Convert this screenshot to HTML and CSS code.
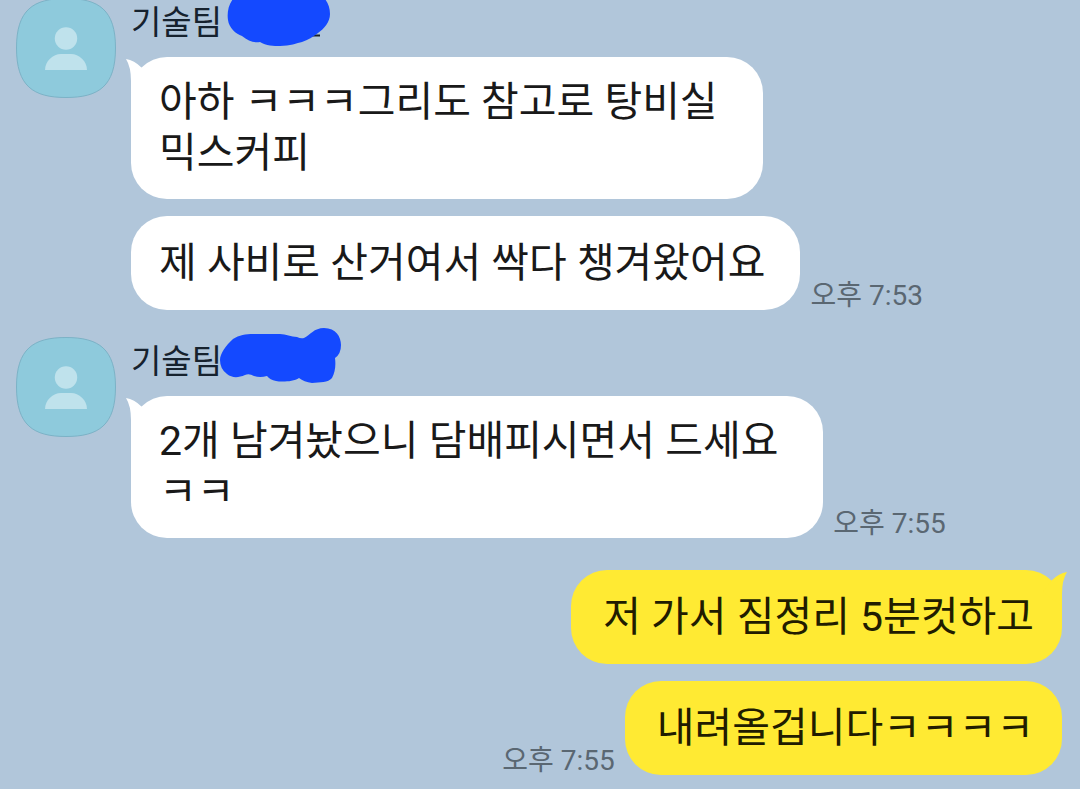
FILE: index.html
```html
<!DOCTYPE html>
<html lang="ko">
<head>
    <meta charset="UTF-8">
    <meta name="viewport" content="width=device-width, initial-scale=1.0">
    <title>기술팀</title>
    <link rel="stylesheet" href="styles.css">
</head>
<body>

    <main class="chat">
        <section class="group">
            <svg class="avatar" viewBox="0 0 100 100" aria-hidden="true">
                <path class="avatar-bg" d="M50 .5C83 .5 99.5 12 99.5 50S83 99.5 50 99.5.5 88 .5 50 17 .5 50 .5Z"/>
                <circle class="avatar-person" cx="50" cy="40.5" r="11.2"/>
                <path class="avatar-person" d="M29 72c0-9 8-16 16-16h10c8 0 16 7 16 16Z"/>
            </svg>
            <div class="content">
                <div class="name">기술팀
                    <svg class="scribble" viewBox="220 -13 130 60" aria-hidden="true">
                        <path class="stroke-rest" d="M312 35.5h8"/>
                        <path d="M233-1C228 5 227 14 228 20C229 28 236 34 242 36C248 41 254 43 260 42C266 46 274 46 280 46C290 46 297 43 302 42C308 40 313 37 318 33C324 29 330 22 330 14C330 8 328 3 325-1Z"/>
                    </svg>
                </div>
                <div class="row">
                    <div class="bubble multi">
                        <svg class="tail" viewBox="0 0 26 36" aria-hidden="true"><path d="M0 2Q8 3 16 11L24 22 5 36V24Q5 10 0 2Z"/></svg>
                        아하 ㅋㅋㅋ그리도 참고로 탕비실<br>믹스커피
                    </div>
                </div>
                <div class="row">
                    <div class="bubble">제 사비로 산거여서 싹다 챙겨왔어요</div>
                    <time class="time">오후 7:53</time>
                </div>
            </div>
        </section>

        <section class="group">
            <svg class="avatar" viewBox="0 0 100 100" aria-hidden="true">
                <path class="avatar-bg" d="M50 .5C83 .5 99.5 12 99.5 50S83 99.5 50 99.5.5 88 .5 50 17 .5 50 .5Z"/>
                <circle class="avatar-person" cx="50" cy="40.5" r="11.2"/>
                <path class="avatar-person" d="M29 72c0-9 8-16 16-16h10c8 0 16 7 16 16Z"/>
            </svg>
            <div class="content">
                <div class="name">기술팀
                    <svg class="scribble" viewBox="220 326 130 60" aria-hidden="true">
                        <path d="M220 360C220 354 226 345 233 339C239 335 246 334 253 334L280 334C286 334 291 337 297 337Q301 339 304 338C310 335 314 328 324 328C336 328 341 337 341 345Q341 354 335 358C336 366 335 372 332 378C328 383 320 382 312 383Q304 382 299 378C293 382 281 382 276 381Q270 380 267 376Q260 378 254 376Q249 373 245 375C238 378 232 378 227 374Q220 369 220 360Z"/>
                    </svg>
                </div>
                <div class="row">
                    <div class="bubble multi">
                        <svg class="tail" viewBox="0 0 26 36" aria-hidden="true"><path d="M0 2Q8 3 16 11L24 22 5 36V24Q5 10 0 2Z"/></svg>
                        2개 남겨놨으니 담배피시면서 드세요<br>ㅋㅋ
                    </div>
                    <time class="time">오후 7:55</time>
                </div>
            </div>
        </section>

        <section class="group mine">
            <div class="content">
                <div class="row">
                    <div class="bubble">
                        <svg class="tail" viewBox="0 0 26 36" aria-hidden="true"><path d="M26 2Q18 3 10 11L2 22 21 36V24Q21 10 26 2Z"/></svg>
                        저 가서 짐정리 5분컷하고
                    </div>
                </div>
                <div class="row">
                    <time class="time">오후 7:55</time>
                    <div class="bubble">내려올겁니다ㅋㅋㅋㅋ</div>
                </div>
            </div>
        </section>
    </main>

</body>
</html>
```
FILE: styles.css
```css
body {
    margin: 0;
    font-family: Roboto, "Noto Sans CJK KR", sans-serif;
    background-color: #b1c6da;
    overflow: hidden;
}
/* the first message is scrolled slightly past the top edge */
.chat {
    display: flex;
    flex-direction: column;
    gap: 27px;
    margin-top: -2px;
    padding: 0 18px 14px 16px;
}
.group {
    display: flex;
    align-items: flex-start;
    gap: 15px;
}
.avatar {
    width: 100px;
    height: 100px;
    flex-shrink: 0;
}
.avatar-bg {
    fill: #8ecadc;
    stroke: #7cb2c6;
}
.avatar-person {
    fill: #bfe2ec;
}
.content {
    display: flex;
    flex-direction: column;
    gap: 17px;
}
.name {
    position: relative;
    margin-bottom: -8px;
    font-size: 33px;
    line-height: 50px;
    color: #16222e;
}
.scribble {
    position: absolute;
    left: 89px;
    top: -11px;
    width: 130px;
    height: 60px;
    fill: #1449ff;
}
.stroke-rest {
    stroke: #16222e;
    stroke-width: 2;
}
.row {
    display: flex;
    align-items: flex-end;
    gap: 10px;
}
.bubble {
    position: relative;
    padding: 22px 35px 21px 28px;
    border-radius: 36px;
    background-color: #fff;
    color: #191919;
    font-size: 41px;
    line-height: 51px;
}
.multi {
    padding: 20px 45px 20px 28px;
}
.tail {
    position: absolute;
    left: -5px;
    top: 0;
    width: 26px;
    height: 36px;
    fill: #fff;
}
.time {
    font-size: 28px;
    line-height: 28px;
    color: #5a6772;
    white-space: nowrap;
}
.mine {
    justify-content: flex-end;
    margin-top: 5px;
}
.mine .content {
    align-items: flex-end;
}
.mine .bubble {
    padding-left: 32px;
    padding-right: 28px;
    background-color: #ffea33;
    color: #211c00;
}
.mine .tail {
    left: auto;
    right: -5px;
    fill: #ffea33;
}
```
